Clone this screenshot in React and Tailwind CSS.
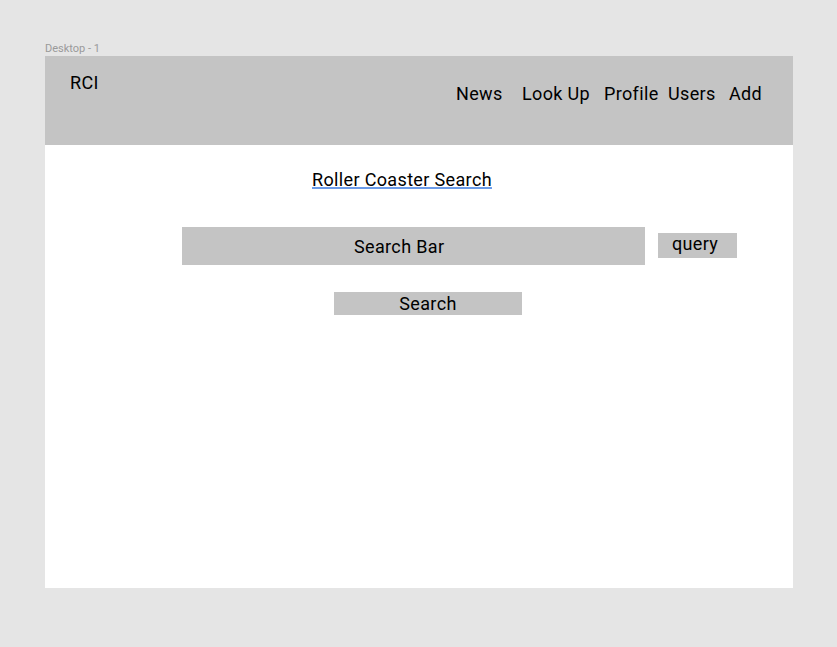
export default function App() {
  return (
    <div
      className="w-[837px] h-[647px] bg-[#e5e5e5] pl-[45px] pt-[41px]"
      style={{ fontFamily: "Roboto, 'Liberation Sans', sans-serif" }}
    >
      <div className="h-[15px] text-[11px] leading-[15px] text-[#9a9a9a]">Desktop - 1</div>
      <div className="w-[748px] h-[532px] bg-white flex flex-col">
        <div className="h-[89px] bg-[#c4c4c4] flex items-start text-[18px] leading-[21px] tracking-[0.35px] text-black">
          <div className="w-[411px] pl-[25px] pt-[16px]">RCI</div>
          <div className="mt-[27px] flex">
            <span className="w-[66px]">News</span>
            <span className="w-[82px]">Look Up</span>
            <span className="w-[64px]">Profile</span>
            <span className="w-[61px]">Users</span>
            <span>Add</span>
          </div>
        </div>
        <div className="flex flex-col text-[18px] leading-[21px] tracking-[0.35px] text-black">
          <div className="pl-[267px] pt-[24px]">
            <span className="underline decoration-[#6b9be8] decoration-2 underline-offset-[1px]">
              Roller Coaster Search
            </span>
          </div>
          <div className="flex items-start ml-[137px] mt-[37px]">
            <div className="w-[463px] h-[38px] bg-[#c4c4c4] flex items-center pl-[172px]">Search Bar</div>
            <div className="ml-[13px] mt-[6px] w-[79px] h-[25px] bg-[#c4c4c4] flex items-start pl-[14px]">query</div>
          </div>
          <div className="ml-[289px] mt-[27px] w-[188px] h-[23px] bg-[#c4c4c4] flex items-center justify-center">
            Search
          </div>
        </div>
      </div>
    </div>
  );
}
